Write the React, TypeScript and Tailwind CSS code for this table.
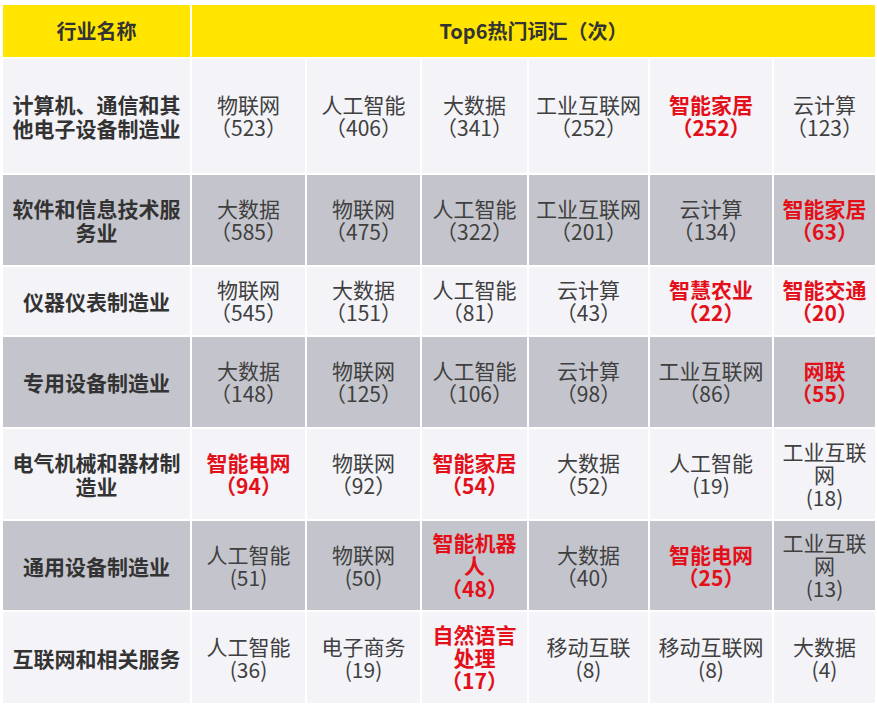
import React from 'react';

type Cell = { lines: string[]; hot?: boolean };
type Row = { name: string[]; cells: Cell[]; gray?: boolean };

const c = (lines: string[], hot = false): Cell => ({ lines, hot });

const rows: Row[] = [
  {
    name: ['计算机、通信和其', '他电子设备制造业'],
    cells: [
      c(['物联网', '（523）']),
      c(['人工智能', '（406）']),
      c(['大数据', '（341）']),
      c(['工业互联网', '（252）']),
      c(['智能家居', '（252）'], true),
      c(['云计算', '（123）']),
    ],
  },
  {
    name: ['软件和信息技术服', '务业'],
    gray: true,
    cells: [
      c(['大数据', '（585）']),
      c(['物联网', '（475）']),
      c(['人工智能', '（322）']),
      c(['工业互联网', '（201）']),
      c(['云计算', '（134）']),
      c(['智能家居', '（63）'], true),
    ],
  },
  {
    name: ['仪器仪表制造业'],
    cells: [
      c(['物联网', '（545）']),
      c(['大数据', '（151）']),
      c(['人工智能', '（81）']),
      c(['云计算', '（43）']),
      c(['智慧农业', '（22）'], true),
      c(['智能交通', '（20）'], true),
    ],
  },
  {
    name: ['专用设备制造业'],
    gray: true,
    cells: [
      c(['大数据', '（148）']),
      c(['物联网', '（125）']),
      c(['人工智能', '（106）']),
      c(['云计算', '（98）']),
      c(['工业互联网', '（86）']),
      c(['网联', '（55）'], true),
    ],
  },
  {
    name: ['电气机械和器材制', '造业'],
    cells: [
      c(['智能电网', '（94）'], true),
      c(['物联网', '（92）']),
      c(['智能家居', '（54）'], true),
      c(['大数据', '（52）']),
      c(['人工智能', '(19)']),
      c(['工业互联', '网', '(18)']),
    ],
  },
  {
    name: ['通用设备制造业'],
    gray: true,
    cells: [
      c(['人工智能', '(51)']),
      c(['物联网', '(50)']),
      c(['智能机器', '人', '（48）'], true),
      c(['大数据', '（40）']),
      c(['智能电网', '（25）'], true),
      c(['工业互联', '网', '(13)']),
    ],
  },
  {
    name: ['互联网和相关服务'],
    cells: [
      c(['人工智能', '(36)']),
      c(['电子商务', '(19)']),
      c(['自然语言', '处理', '（17）'], true),
      c(['移动互联', '(8)']),
      c(['移动互联网', '(8)']),
      c(['大数据', '(4)']),
    ],
  },
];

const font = { fontFamily: '"Noto Sans CJK SC", "Noto Sans", sans-serif' };

export default function App() {
  return (
    <div className="w-[877px] h-[710px] bg-white pl-[3px] pt-[5px]" style={font}>
      <div className="grid grid-cols-[187px_113px_113px_105px_119px_122px_101px] grid-rows-[52px_114px_90px_68px_90px_90px_89px_91px] gap-[2px]">
        {/* Header */}
        <div className="bg-[#ffe500] flex items-center justify-center text-[20px] font-bold text-[#333]">
          行业名称
        </div>
        <div className="col-span-6 bg-[#ffe500] flex items-center justify-center text-[20px] font-bold text-[#333]">
          Top6热门词汇（次）
        </div>

        {rows.map((row, i) => (
          <React.Fragment key={i}>
            <div
              className={`${row.gray ? 'bg-[#c4c5cc]' : 'bg-[#f3f3f8]'} flex flex-col items-center justify-center text-[21px] leading-[24px] font-bold text-[#333]`}
            >
              {row.name.map((l, k) => (
                <span key={k}>{l}</span>
              ))}
            </div>
            {row.cells.map((cell, j) => (
              <div
                key={j}
                className={`${row.gray ? 'bg-[#c4c5cc]' : 'bg-[#f3f3f8]'} flex flex-col items-center justify-center text-[21px] leading-[23px] whitespace-nowrap ${
                  cell.hot ? 'font-bold text-[#e3101a]' : 'font-normal text-[#404040]'
                }`}
              >
                {cell.lines.map((l, k) => (
                  <span key={k}>{l}</span>
                ))}
              </div>
            ))}
          </React.Fragment>
        ))}
      </div>
    </div>
  );
}
